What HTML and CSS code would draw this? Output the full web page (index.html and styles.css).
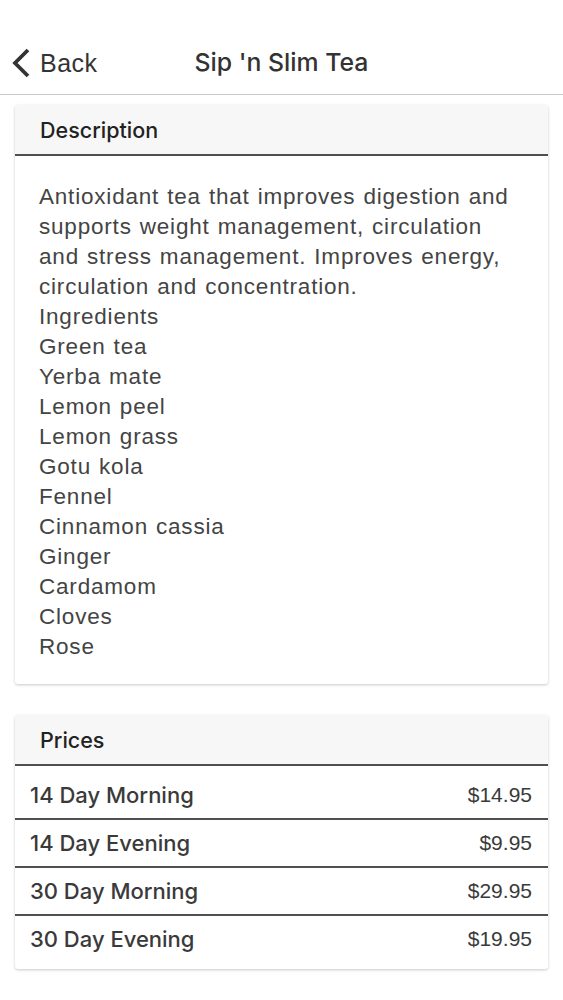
FILE: index.html
```html
<!DOCTYPE html>
<html>
<head>
<meta charset="utf-8">
<link rel="stylesheet" href="styles.css">
</head>
<body>
<header class="nav">
  <div class="back">
    <svg class="chev" width="22" height="32" viewBox="0 0 22 32"><path d="M18 3 L5 16 L18 29" fill="none" stroke="#333" stroke-width="3.8" stroke-linecap="butt" stroke-linejoin="miter"/></svg>
    <span>Back</span>
  </div>
  <div class="title">Sip 'n Slim Tea</div>
</header>
<main class="content">
  <section class="card">
    <div class="card-head">Description</div>
    <div class="desc">Antioxidant tea that improves digestion and supports weight management, circulation and stress management. Improves energy, circulation and concentration.<br>Ingredients<br>Green tea<br>Yerba mate<br>Lemon peel<br>Lemon grass<br>Gotu kola<br>Fennel<br>Cinnamon cassia<br>Ginger<br>Cardamom<br>Cloves<br>Rose</div>
  </section>
  <section class="card prices">
    <div class="card-head">Prices</div>
    <ul class="list">
      <li class="row"><span class="name">14 Day Morning</span><span class="price">$14.95</span></li>
      <li class="row"><span class="name">14 Day Evening</span><span class="price">$9.95</span></li>
      <li class="row"><span class="name">30 Day Morning</span><span class="price">$29.95</span></li>
      <li class="row"><span class="name">30 Day Evening</span><span class="price">$19.95</span></li>
    </ul>
  </section>
</main>
</body>
</html>
```
FILE: styles.css
```css
html, body {
  margin: 0;
  padding: 0;
  background: #fff;
}
body {
  font-family: "Liberation Sans", Arial, sans-serif;
  color: #333;
  width: 563px;
}
.nav {
  position: relative;
  height: 95px;
  border-bottom: 1px solid #c8c8c8;
  display: flex;
  align-items: center;
  box-sizing: border-box;
}
.back {
  display: flex;
  align-items: center;
  gap: 8px;
  margin-left: 10px;
  margin-top: 32px;
  font-size: 25px;
  letter-spacing: 0.5px;
  color: #333;
}
.chev { display: block; }
.title {
  position: absolute;
  left: 0;
  right: 0;
  top: 47px;
  text-align: center;
  font-family: Inter, "Liberation Sans", sans-serif;
  font-size: 24.8px;
  font-weight: 500;
  color: #333;
  pointer-events: none;
}
.content {
  padding: 10px 15px 20px;
  display: flex;
  flex-direction: column;
  gap: 31px;
}
.card {
  background: #fff;
  border-radius: 3px;
  box-shadow: 0 1px 3px rgba(0,0,0,0.22);
  overflow: hidden;
}
.card-head {
  height: 49px;
  background: #f7f7f8;
  border-bottom: 2px solid #4f4f4f;
  display: flex;
  align-items: center;
  padding-left: 25px;
  font-family: Inter, "Liberation Sans", sans-serif;
  font-size: 21.5px;
  font-weight: 500;
  color: #222;
  box-sizing: content-box;
}
.desc {
  padding: 26px 28px 22px 24px;
  font-size: 22.5px;
  letter-spacing: 0.8px;
  word-spacing: 1px;
  line-height: 30px;
  color: #444;
}
.list {
  list-style: none;
  margin: 0;
  padding: 6px 0 7px;
}
.row {
  height: 46px;
  display: flex;
  align-items: center;
  justify-content: space-between;
  padding: 0 16px 0 15px;
  color: #333;
}
.row + .row {
  border-top: 2px solid #4f4f4f;
}
.name {
  font-family: Inter, "Liberation Sans", sans-serif;
  font-size: 22px;
  font-weight: 500;
  color: #3a3a3a;
}
.price {
  font-size: 21px;
  color: #3a3a3a;
}
```
